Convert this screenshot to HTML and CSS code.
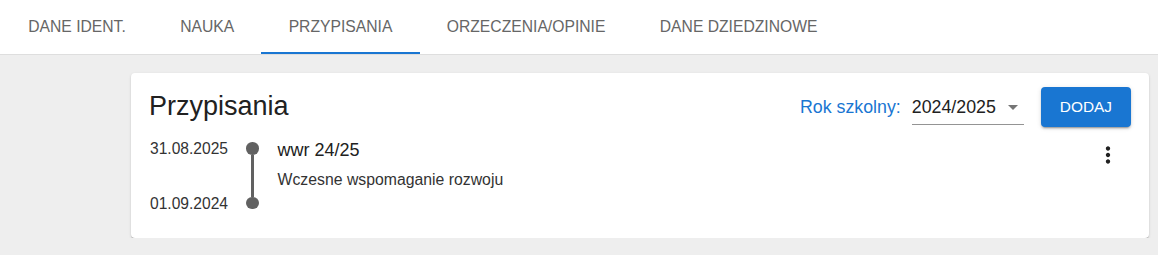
FILE: index.html
```html
<!DOCTYPE html>
<html lang="pl">
<head>
  <meta charset="UTF-8" />
  <meta name="viewport" content="width=device-width, initial-scale=1.0"/>
  <title>Przypisania</title>
  <link rel="stylesheet" href="styles.css">
</head>
<body>
  <nav class="tabs">
    <div class="tab">DANE IDENT.</div>
    <div class="tab">NAUKA</div>
    <div class="tab active">PRZYPISANIA</div>
    <div class="tab">ORZECZENIA/OPINIE</div>
    <div class="tab">DANE DZIEDZINOWE</div>
  </nav>

  <div class="card">
    <div class="card-header">
      <h2 class="title">Przypisania</h2>
      <div class="controls">
        <span class="year-label">Rok szkolny:</span>
        <div class="select">
          <span class="select-value">2024/2025</span>
          <span class="select-arrow"></span>
        </div>
        <button class="btn">DODAJ</button>
      </div>
    </div>

    <div class="entry">
      <div class="dates">
        <span>31.08.2025</span>
        <span>01.09.2024</span>
      </div>
      <div class="track">
        <span class="dot"></span>
        <span class="line"></span>
        <span class="dot"></span>
      </div>
      <div class="entry-body">
        <div class="entry-name">wwr 24/25</div>
        <div class="entry-desc">Wczesne wspomaganie rozwoju</div>
      </div>
      <svg class="kebab" viewBox="0 0 24 24" width="26" height="26">
        <path d="M12 8c1.1 0 2-.9 2-2s-.9-2-2-2-2 .9-2 2 .9 2 2 2zm0 2c-1.1 0-2 .9-2 2s.9 2 2 2 2-.9 2-2-.9-2-2-2zm0 6c-1.1 0-2 .9-2 2s.9 2 2 2 2-.9 2-2-.9-2-2-2z" fill="#212121"/>
      </svg>
    </div>
  </div>
</body>
</html>
```

FILE: styles.css
```css
body {
  margin: 0;
  background-color: #eeeeee;
  font-family: "Liberation Sans", Arial, sans-serif;
  color: #212121;
}

.tabs {
  display: flex;
  height: 54px;
  padding-left: 1px;
  background-color: #fff;
  border-bottom: 1px solid #dedede;
}

.tab {
  display: flex;
  align-items: center;
  padding: 0 27.2px;
  font-size: 15.7px;
  color: #666;
}

.tab.active {
  box-shadow: inset 0 -2px #1976d2;
}

.card {
  margin: 18px 9px 0 131px;
  padding: 14px 18px 25px 18px;
  background-color: #fff;
  border-radius: 4px;
  box-shadow: 0 2px 1px -1px rgba(0, 0, 0, 0.2), 0 1px 1px 0 rgba(0, 0, 0, 0.14), 0 1px 3px 0 rgba(0, 0, 0, 0.12);
}

.card-header {
  display: flex;
  justify-content: space-between;
  align-items: center;
  height: 40px;
}

.title {
  margin: 0 0 2px 0;
  font-size: 27px;
  font-weight: normal;
}

.controls {
  display: flex;
  align-items: center;
}

.year-label {
  font-size: 17.8px;
  color: #1976d2;
  margin-right: 11px;
}

.select {
  display: flex;
  align-items: center;
  padding: 7px 0 6px 0;
  border-bottom: 1px solid #949494;
  font-size: 17.8px;
  margin-right: 17px;
}

.select-arrow {
  width: 0;
  height: 0;
  margin: 0 5.5px 0 12.5px;
  border-left: 5.5px solid transparent;
  border-right: 5.5px solid transparent;
  border-top: 5.5px solid #757575;
}

.btn {
  height: 40px;
  padding: 0 19px;
  border: none;
  border-radius: 4px;
  background-color: #1976d2;
  color: #fff;
  font-family: inherit;
  font-size: 15.4px;
  box-shadow: 0 3px 1px -2px rgba(0, 0, 0, 0.2), 0 2px 2px 0 rgba(0, 0, 0, 0.14), 0 1px 5px 0 rgba(0, 0, 0, 0.12);
}

.entry {
  display: flex;
  align-items: flex-start;
  margin-top: 13px;
}

.dates {
  display: flex;
  flex-direction: column;
  gap: 37px;
  font-size: 15.6px;
  line-height: 18px;
  color: #333;
  margin-left: 1px;
}

.track {
  display: flex;
  flex-direction: column;
  align-items: center;
  margin: 2px 18.7px 0 18.3px;
}

.dot {
  width: 12.5px;
  height: 12.5px;
  border-radius: 50%;
  background-color: #616161;
}

.line {
  width: 2.4px;
  height: 42px;
  background-color: #616161;
}

.entry-body {
  flex: 1;
}

.entry-name {
  font-size: 18px;
}

.entry-desc {
  margin-top: 10px;
  font-size: 15.8px;
  color: #333;
}

.kebab {
  margin: 1.5px 10px 0 0;
}
```
